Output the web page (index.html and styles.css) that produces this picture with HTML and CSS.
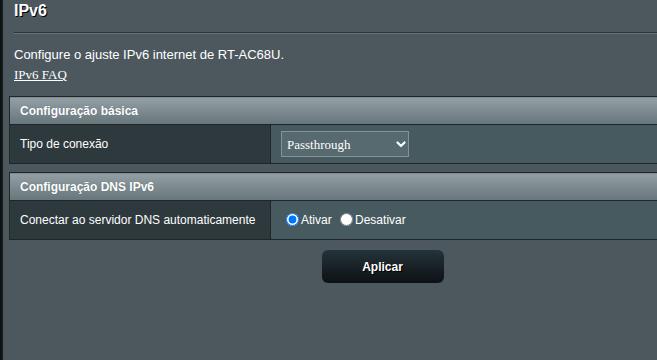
FILE: index.html
```html
<!DOCTYPE html>
<html lang="pt">
<head>
    <meta charset="UTF-8">
    <title>IPv6</title>
    <link rel="stylesheet" href="styles.css">
</head>
<body>

<div class="page">
    <div class="side-strip"></div>

    <div class="main">
        <h1 class="page-title">IPv6</h1>
        <div class="title-line"></div>

        <p class="intro">Configure o ajuste IPv6 internet de RT-AC68U.</p>
        <a href="#" class="faq-link">IPv6 FAQ</a>

        <table class="form-table">
            <colgroup><col class="label-col"><col></colgroup>
            <thead>
                <tr><th colspan="2">Configuração básica</th></tr>
            </thead>
            <tbody>
                <tr>
                    <td class="label-cell">Tipo de conexão</td>
                    <td class="value-cell">
                        <span class="select-wrap">
                            <select class="input-select">
                                <option>Passthrough</option>
                                <option>Native</option>
                                <option>Static IPv6</option>
                                <option>Desativar</option>
                            </select>
                            <svg class="select-arrow" width="10" height="7" viewBox="0 0 10 7">
                                <path d="M1.5 1.5 L5 5 L8.5 1.5" fill="none" stroke="#fff" stroke-width="2.2" stroke-linecap="round" stroke-linejoin="round"/>
                            </svg>
                        </span>
                    </td>
                </tr>
            </tbody>
        </table>

        <table class="form-table">
            <colgroup><col class="label-col"><col></colgroup>
            <thead>
                <tr><th colspan="2">Configuração DNS IPv6</th></tr>
            </thead>
            <tbody>
                <tr>
                    <td class="label-cell">Conectar ao servidor DNS automaticamente</td>
                    <td class="value-cell">
                        <input type="radio" name="dns_auto" id="dns_on" checked><label for="dns_on">Ativar</label>
                        <input type="radio" name="dns_auto" id="dns_off"><label for="dns_off">Desativar</label>
                    </td>
                </tr>
            </tbody>
        </table>

        <div class="actions">
            <button class="apply-btn">Aplicar</button>
        </div>
    </div>
</div>

</body>
</html>
```

FILE: styles.css
```css
html, body {
    margin: 0;
    padding: 0;
    height: 100%;
    overflow: hidden;
}

body {
    background-color: #4d585e;
    font-family: "Liberation Sans", Arial, sans-serif;
    font-size: 13px;
    color: #fff;
}

.page {
    display: flex;
    min-height: 100%;
    overflow: hidden;
}

.side-strip {
    width: 3px;
    flex: none;
    background: linear-gradient(to right, #0b0f10, #182124);
}

.main {
    width: 747px;
    flex: none;
    padding-left: 6px;
}

.page-title {
    margin: 0 0 0 5px;
    padding-top: 2px;
    font-size: 16px;
    line-height: 18px;
    font-weight: bold;
    color: #fff;
    text-shadow: 1px 1px 0 #000;
}

.title-line {
    margin: 12px 0 0 5px;
    height: 0;
    border-top: 1px solid #2b3538;
    border-bottom: 1px solid #66747a;
}

.intro {
    margin: 13px 0 0 5px;
    line-height: 16px;
}

.faq-link {
    display: inline-block;
    margin: 4px 0 0 5px;
    font-family: "Liberation Serif", "Times New Roman", serif;
    font-size: 13px;
    line-height: 16px;
    color: #fff;
    text-decoration: underline;
}

.form-table {
    width: 100%;
    table-layout: fixed;
    border-collapse: collapse;
    border: 1px solid #1f2628;
    margin-top: 13px;
    font-size: 12px;
}

.form-table + .form-table {
    margin-top: 8px;
}

.label-col {
    width: 261px;
}

.form-table th {
    height: 27px;
    padding: 0 10px;
    text-align: left;
    font-size: 12px;
    font-weight: bold;
    color: #fff;
    background: linear-gradient(to bottom, #939fa4, #67767c);
    border: 1px solid #1f2628;
    text-shadow: 0 0 1px #5a676c;
}

.form-table td {
    height: 38px;
    padding: 0 10px;
    border: 1px solid #1f2628;
    white-space: nowrap;
    overflow: hidden;
}

.label-cell {
    background-color: #2e393e;
}

.value-cell {
    background-color: #475a5f;
}

.select-wrap {
    position: relative;
    display: inline-block;
    vertical-align: middle;
}

.input-select {
    appearance: none;
    -webkit-appearance: none;
    width: 128px;
    height: 26px;
    padding: 0 0 0 5px;
    margin: 0;
    font-family: "Liberation Serif", "Times New Roman", serif;
    font-size: 13px;
    color: #fff;
    background-color: #576a6f;
    border: 1px solid #849496;
    border-radius: 0;
}

.select-arrow {
    position: absolute;
    right: 3px;
    top: 10px;
    pointer-events: none;
}

.value-cell input[type="radio"] {
    margin: 0 2px 0 5px;
    width: 13px;
    height: 13px;
    vertical-align: -2px;
}

.value-cell label {
    font-size: 12px;
    color: #fff;
}

.actions {
    display: flex;
    justify-content: center;
    margin-top: 10px;
}

.apply-btn {
    width: 122px;
    height: 33px;
    border: none;
    border-radius: 6px;
    background: linear-gradient(to bottom, #24333a, #0d1114);
    color: #fff;
    font-family: "Liberation Sans", Arial, sans-serif;
    font-size: 12px;
    font-weight: bold;
    text-shadow: 1px 1px 0 #000;
    cursor: pointer;
}
```
